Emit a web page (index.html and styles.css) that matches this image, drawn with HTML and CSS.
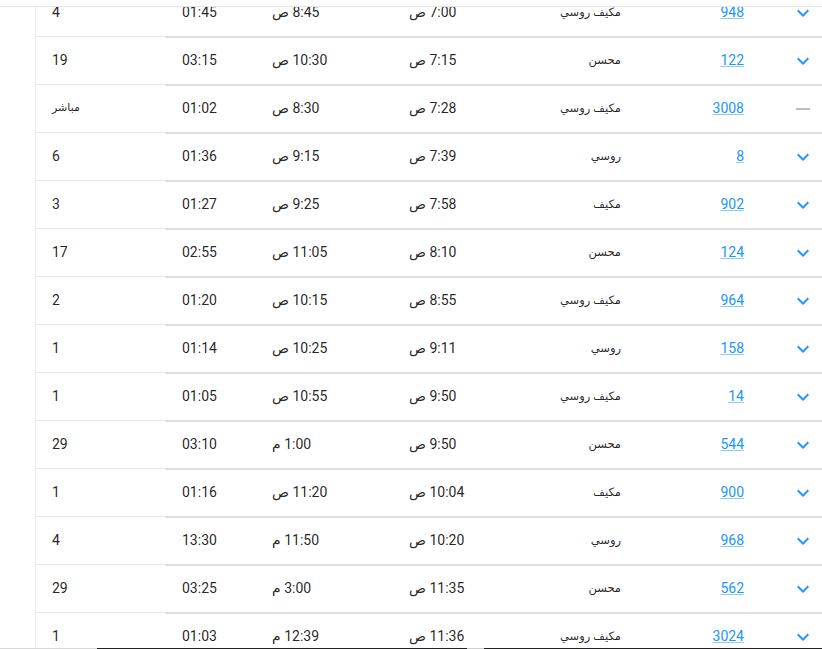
FILE: index.html
```html
<!DOCTYPE html>
<html lang="ar">
<head>
<meta charset="utf-8">
<title>Flights</title>
<link rel="stylesheet" href="styles.css">
</head>
<body>
<div class="topbar"></div>
<div class="viewport">
  <div class="gutter"></div>
  <div class="scroller">
    <table class="flights" dir="rtl">
      <colgroup>
        <col class="c-exp"><col class="c-num"><col class="c-type"><col class="c-dep"><col class="c-arr"><col class="c-dur"><col class="c-stops">
      </colgroup>
      <tbody>
        <tr><td class="exp"><svg class="chev" viewBox="0 0 24 24"><path d="M16.59 8.59L12 13.17 7.41 8.59 6 10l6 6 6-6z"/></svg></td><td class="num"><a href="#">948</a></td><td class="type">مكيف روسي</td><td class="dep">7:00 ص</td><td class="arr">8:45 ص</td><td class="dur">01:45</td><td class="stops">4</td></tr>
        <tr><td class="exp"><svg class="chev" viewBox="0 0 24 24"><path d="M16.59 8.59L12 13.17 7.41 8.59 6 10l6 6 6-6z"/></svg></td><td class="num"><a href="#">122</a></td><td class="type">محسن</td><td class="dep">7:15 ص</td><td class="arr">10:30 ص</td><td class="dur">03:15</td><td class="stops">19</td></tr>
        <tr><td class="exp"><span class="dash"></span></td><td class="num"><a href="#">3008</a></td><td class="type">مكيف روسي</td><td class="dep">7:28 ص</td><td class="arr">8:30 ص</td><td class="dur">01:02</td><td class="stops ar">مباشر</td></tr>
        <tr><td class="exp"><svg class="chev" viewBox="0 0 24 24"><path d="M16.59 8.59L12 13.17 7.41 8.59 6 10l6 6 6-6z"/></svg></td><td class="num"><a href="#">8</a></td><td class="type">روسي</td><td class="dep">7:39 ص</td><td class="arr">9:15 ص</td><td class="dur">01:36</td><td class="stops">6</td></tr>
        <tr><td class="exp"><svg class="chev" viewBox="0 0 24 24"><path d="M16.59 8.59L12 13.17 7.41 8.59 6 10l6 6 6-6z"/></svg></td><td class="num"><a href="#">902</a></td><td class="type">مكيف</td><td class="dep">7:58 ص</td><td class="arr">9:25 ص</td><td class="dur">01:27</td><td class="stops">3</td></tr>
        <tr><td class="exp"><svg class="chev" viewBox="0 0 24 24"><path d="M16.59 8.59L12 13.17 7.41 8.59 6 10l6 6 6-6z"/></svg></td><td class="num"><a href="#">124</a></td><td class="type">محسن</td><td class="dep">8:10 ص</td><td class="arr">11:05 ص</td><td class="dur">02:55</td><td class="stops">17</td></tr>
        <tr><td class="exp"><svg class="chev" viewBox="0 0 24 24"><path d="M16.59 8.59L12 13.17 7.41 8.59 6 10l6 6 6-6z"/></svg></td><td class="num"><a href="#">964</a></td><td class="type">مكيف روسي</td><td class="dep">8:55 ص</td><td class="arr">10:15 ص</td><td class="dur">01:20</td><td class="stops">2</td></tr>
        <tr><td class="exp"><svg class="chev" viewBox="0 0 24 24"><path d="M16.59 8.59L12 13.17 7.41 8.59 6 10l6 6 6-6z"/></svg></td><td class="num"><a href="#">158</a></td><td class="type">روسي</td><td class="dep">9:11 ص</td><td class="arr">10:25 ص</td><td class="dur">01:14</td><td class="stops">1</td></tr>
        <tr><td class="exp"><svg class="chev" viewBox="0 0 24 24"><path d="M16.59 8.59L12 13.17 7.41 8.59 6 10l6 6 6-6z"/></svg></td><td class="num"><a href="#">14</a></td><td class="type">مكيف روسي</td><td class="dep">9:50 ص</td><td class="arr">10:55 ص</td><td class="dur">01:05</td><td class="stops">1</td></tr>
        <tr><td class="exp"><svg class="chev" viewBox="0 0 24 24"><path d="M16.59 8.59L12 13.17 7.41 8.59 6 10l6 6 6-6z"/></svg></td><td class="num"><a href="#">544</a></td><td class="type">محسن</td><td class="dep">9:50 ص</td><td class="arr">1:00 م</td><td class="dur">03:10</td><td class="stops">29</td></tr>
        <tr><td class="exp"><svg class="chev" viewBox="0 0 24 24"><path d="M16.59 8.59L12 13.17 7.41 8.59 6 10l6 6 6-6z"/></svg></td><td class="num"><a href="#">900</a></td><td class="type">مكيف</td><td class="dep">10:04 ص</td><td class="arr">11:20 ص</td><td class="dur">01:16</td><td class="stops">1</td></tr>
        <tr><td class="exp"><svg class="chev" viewBox="0 0 24 24"><path d="M16.59 8.59L12 13.17 7.41 8.59 6 10l6 6 6-6z"/></svg></td><td class="num"><a href="#">968</a></td><td class="type">روسي</td><td class="dep">10:20 ص</td><td class="arr">11:50 م</td><td class="dur">13:30</td><td class="stops">4</td></tr>
        <tr><td class="exp"><svg class="chev" viewBox="0 0 24 24"><path d="M16.59 8.59L12 13.17 7.41 8.59 6 10l6 6 6-6z"/></svg></td><td class="num"><a href="#">562</a></td><td class="type">محسن</td><td class="dep">11:35 ص</td><td class="arr">3:00 م</td><td class="dur">03:25</td><td class="stops">29</td></tr>
        <tr><td class="exp"><svg class="chev" viewBox="0 0 24 24"><path d="M16.59 8.59L12 13.17 7.41 8.59 6 10l6 6 6-6z"/></svg></td><td class="num"><a href="#">3024</a></td><td class="type">مكيف روسي</td><td class="dep">11:36 ص</td><td class="arr">12:39 م</td><td class="dur">01:03</td><td class="stops">1</td></tr>
      </tbody>
    </table>
  </div>
</div>
<div class="bottom-edge"></div>
</body>
</html>
```
FILE: styles.css
```css
html, body {
  margin: 0;
  padding: 0;
  height: 649px;
  overflow: hidden;
  background: #fff;
}
body {
  font-family: Roboto, "DejaVu Sans", sans-serif;
  font-size: 14px;
  color: rgba(0, 0, 0, 0.87);
}
.topbar {
  height: 6px;
  border-bottom: 1px solid #e4e4e4;
}
.viewport {
  display: flex;
  height: 642px;
  overflow: hidden;
}
.gutter {
  width: 35px;
  flex: none;
  border-right: 1px solid #ececec;
}
.scroller {
  flex: 1;
  overflow: hidden;
}
.flights {
  width: 786px;
  margin-top: -17px;
  border-collapse: separate;
  border-spacing: 0;
  table-layout: fixed;
}
.c-exp { width: 52px; }
.c-num { width: 130px; }
.c-type { width: 160px; }
.c-dep { width: 85px; }
.c-arr { width: 135px; }
.c-dur { width: 95px; }
.c-stops { width: 129px; }
.flights td {
  height: 44px;
  padding: 0 0 2px;
  border-bottom: 2px solid #e0e0e0;
  vertical-align: middle;
  white-space: nowrap;
  line-height: 20px;
}
.flights td.exp {
  text-align: right;
  padding-right: 7px;
}
.chev {
  width: 24px;
  height: 24px;
  fill: #2196f3;
  display: block;
  margin-top: 1px;
}
.dash {
  display: block;
  width: 14px;
  height: 2px;
  background: #bdbdbd;
  margin-right: 5px;
  margin-top: 2px;
}
.flights td.num {
  text-align: right;
  padding-right: 26px;
}
.num a {
  color: #2196f3;
  text-decoration: underline;
  text-decoration-color: #90caf9;
}
.flights td.type {
  text-align: right;
  padding-right: 19px;
  font-size: 11.5px;
}
.flights td.dep {
  text-align: left;
  padding-left: 14px;
}
.flights td.arr {
  text-align: left;
  padding-left: 12px;
}
.flights td.dur {
  text-align: left;
  padding-left: 17px;
}
.flights td.stops {
  text-align: left;
  padding-left: 16px;
  border-bottom: 2px solid transparent;
  background-origin: border-box;
  background-image: linear-gradient(to top, #fff 1px, #e8e8e8 1px, #e8e8e8 2px, #fff 2px);
}
.flights td.stops.ar {
  font-size: 11px;
}
.bottom-edge {
  position: fixed;
  left: 0;
  right: 0;
  bottom: 0;
  height: 1px;
  background: linear-gradient(to right, #d8d8d8 0 97px, #222 97px 467px, #cfcfcf 467px 484px, #222 484px);
}
```
